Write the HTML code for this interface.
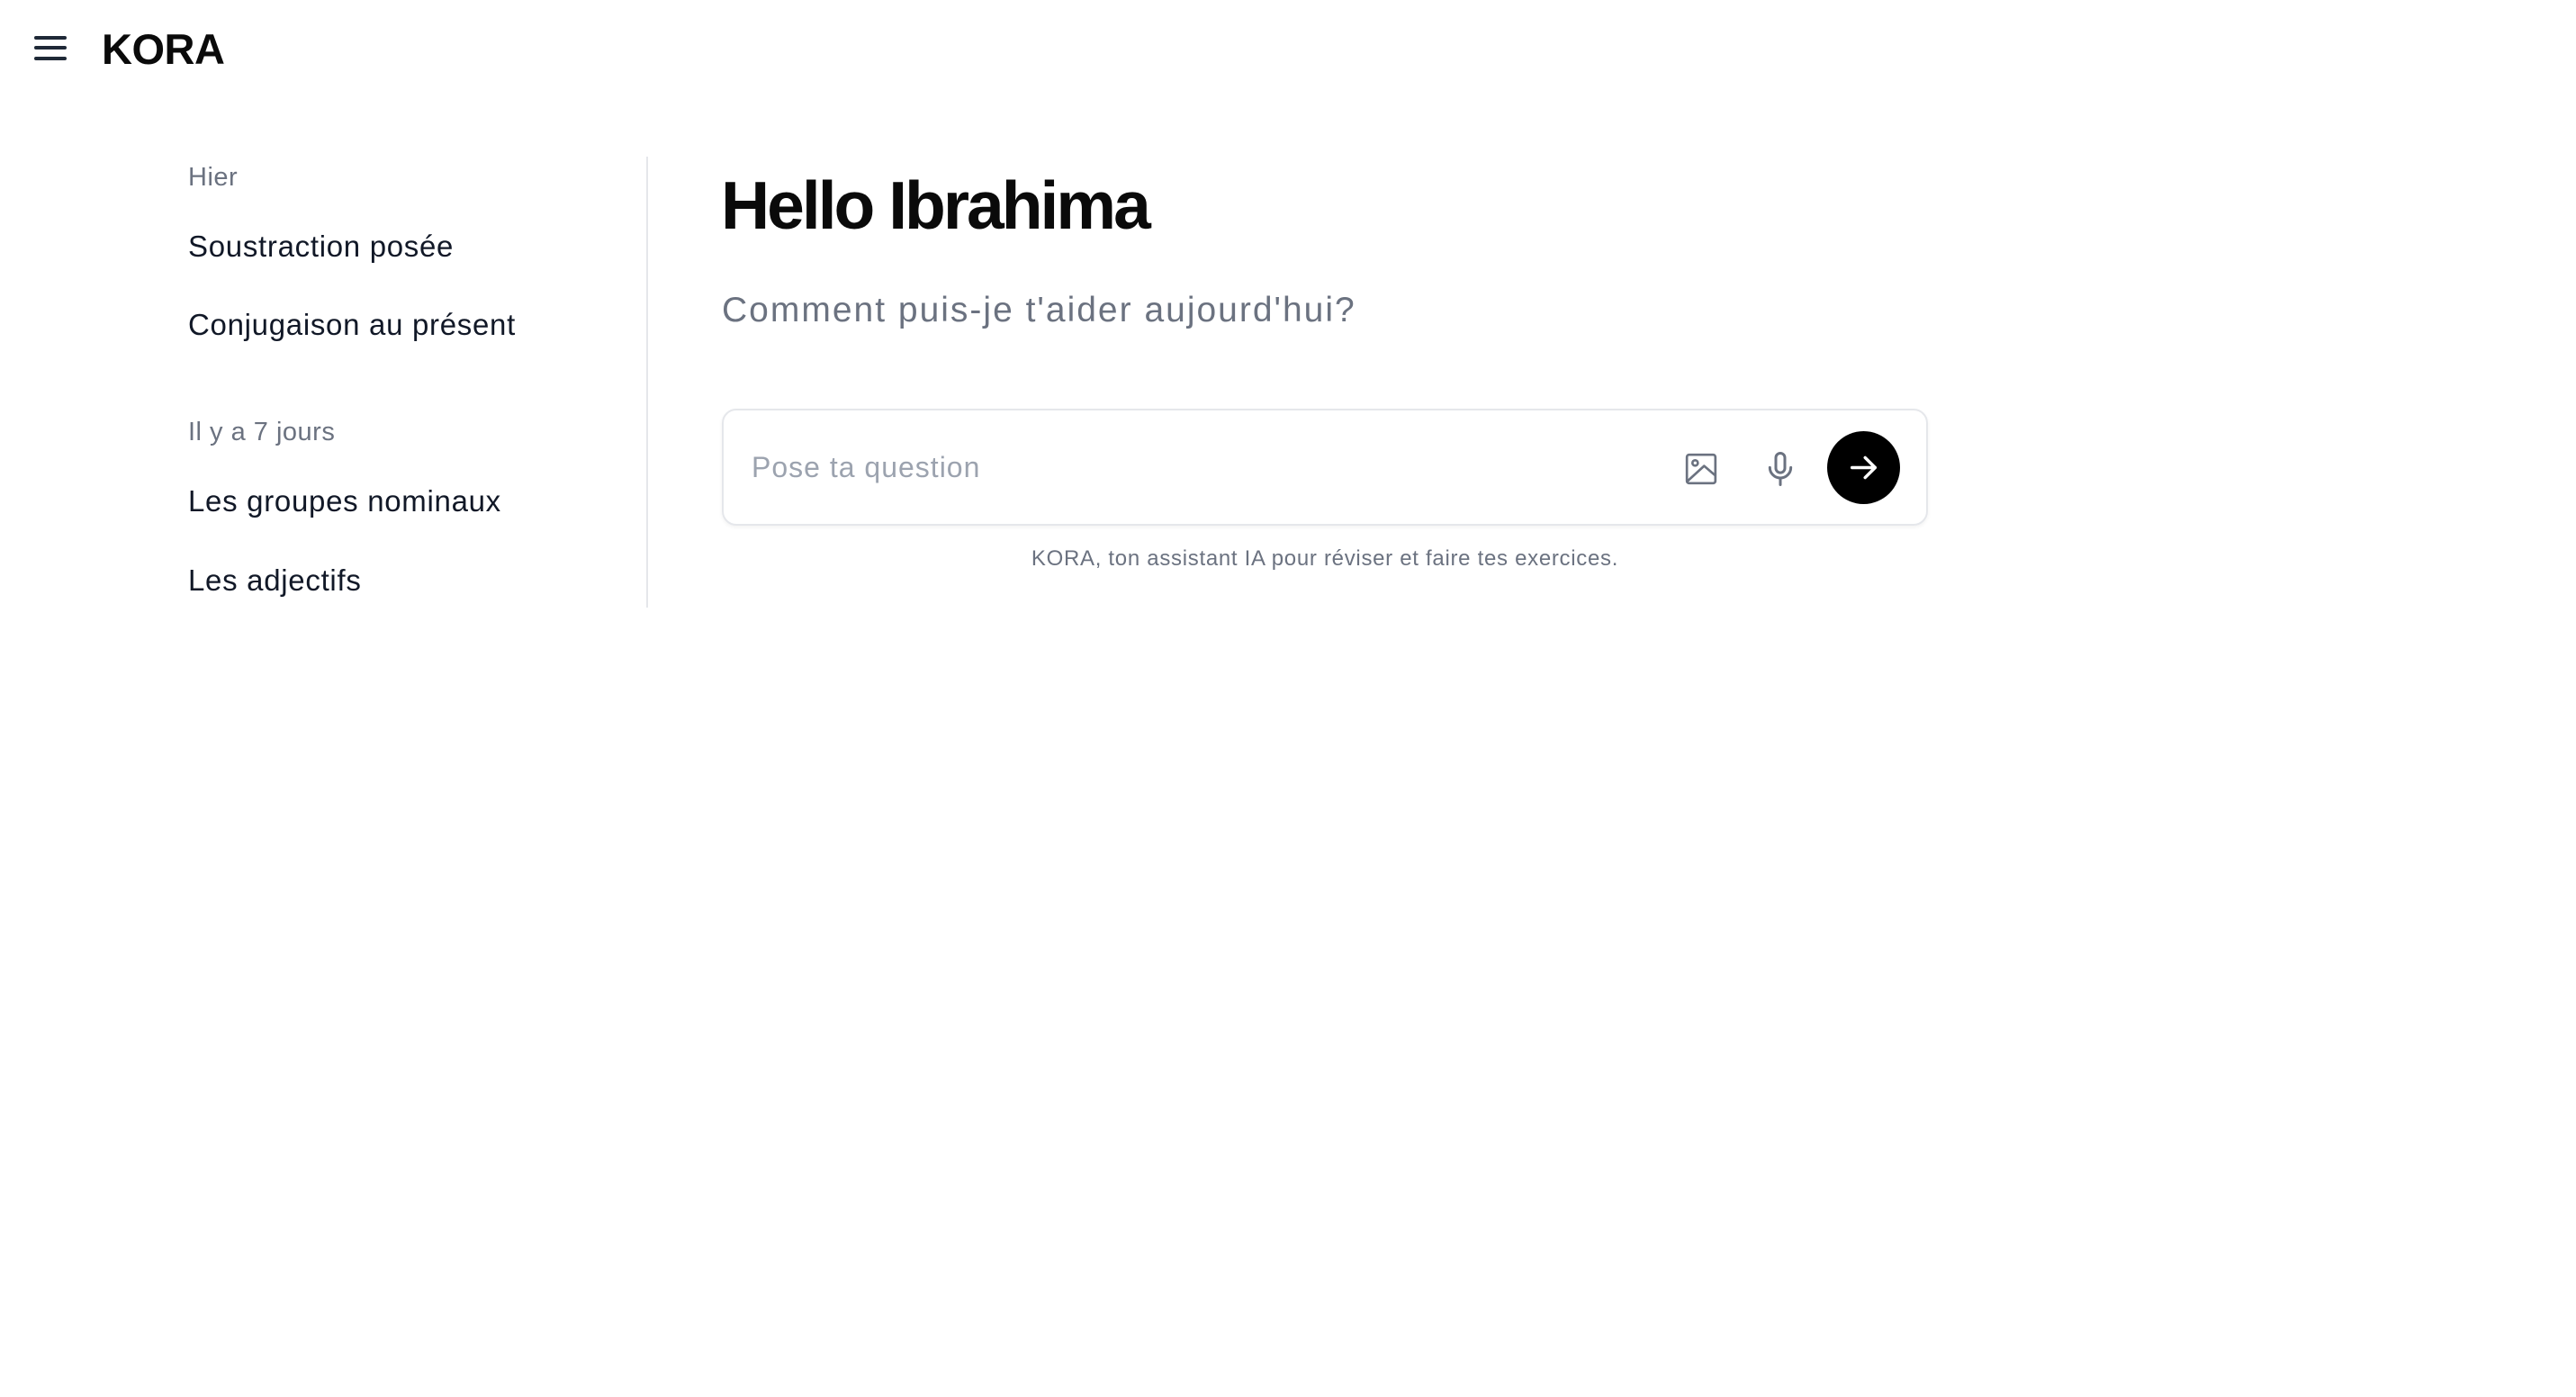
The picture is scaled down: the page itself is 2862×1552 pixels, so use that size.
<!DOCTYPE html>
<html><head><meta charset="utf-8"><style>
html,body{margin:0;padding:0;background:#fff;width:2862px;height:1552px;overflow:hidden;font-family:"Liberation Sans",sans-serif}
.t{position:absolute;white-space:nowrap;line-height:1}
.side{color:#111827;font-size:33px;letter-spacing:0.7px}
.lab{color:#6b7280;font-size:29px;letter-spacing:0.5px}
</style></head><body>
<svg style="position:absolute;left:36px;top:36px" width="40" height="36" viewBox="0 0 40 36">
<g stroke="#1f2937" stroke-width="4" stroke-linecap="round"><line x1="4" y1="6" x2="36" y2="6"/><line x1="4" y1="17" x2="36" y2="17"/><line x1="4" y1="29" x2="36" y2="29"/></g></svg>
<div class="t" style="left:113px;top:31px;font-size:47px;font-weight:bold;color:#0a0a0a;letter-spacing:-0.5px">KORA</div>

<div class="t lab" style="left:209px;top:183px">Hier</div>
<div class="t side" style="left:209px;top:257px">Soustraction posée</div>
<div class="t side" style="left:209px;top:344px">Conjugaison au présent</div>
<div class="t lab" style="left:209px;top:466px">Il y a 7 jours</div>
<div class="t side" style="left:209px;top:540px">Les groupes nominaux</div>
<div class="t side" style="left:209px;top:628px">Les adjectifs</div>
<div style="position:absolute;left:718px;top:174px;width:2px;height:501px;background:#e5e7eb"></div>

<div class="t" style="left:801px;top:191px;font-size:75px;font-weight:bold;color:#0a0a0a;letter-spacing:-3px">Hello Ibrahima</div>
<div class="t" style="left:802px;top:325px;font-size:39px;color:#6b7280;letter-spacing:2px">Comment puis-je t'aider aujourd'hui?</div>

<div style="position:absolute;left:802px;top:454px;width:1336px;height:126px;border:2px solid #e5e7eb;border-radius:16px;box-shadow:0 2px 4px rgba(0,0,0,0.05)"></div>
<div class="t" style="left:835px;top:503px;font-size:32px;color:#9ca3af;letter-spacing:1px">Pose ta question</div>
<svg style="position:absolute;left:1870px;top:501px" width="40" height="40" viewBox="0 0 24 24" fill="none" stroke="#6b7280" stroke-width="1.6" stroke-linecap="round" stroke-linejoin="round">
<rect x="2.5" y="2.5" width="19" height="19" rx="1.5"/><circle cx="8" cy="8" r="1.8"/><path d="M3 20 L14 10 L21 16"/></svg>
<svg style="position:absolute;left:1958px;top:501px" width="40" height="40" viewBox="0 0 24 24" fill="none" stroke="#6b7280" stroke-width="1.8" stroke-linecap="round" stroke-linejoin="round">
<rect x="9" y="1.5" width="6" height="13" rx="3"/><path d="M5 11a7 7 0 0 0 14 0"/><line x1="12" y1="18" x2="12" y2="22.5"/></svg>
<div style="position:absolute;left:2030px;top:479px;width:81px;height:81px;border-radius:50%;background:#000"></div>
<svg style="position:absolute;left:2050px;top:499px" width="41" height="41" viewBox="0 0 24 24" fill="none" stroke="#fff" stroke-width="2" stroke-linecap="round" stroke-linejoin="round">
<path d="M4.5 12h15M13 5.5l6.5 6.5-6.5 6.5"/></svg>

<div class="t" style="left:1472px;transform:translateX(-50%);top:609px;font-size:24px;color:#6b7280;letter-spacing:0.7px">KORA, ton assistant IA pour réviser et faire tes exercices.</div>
</body></html>
